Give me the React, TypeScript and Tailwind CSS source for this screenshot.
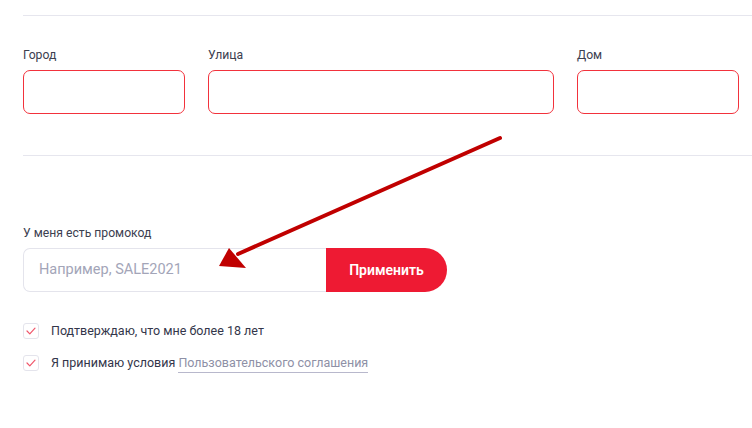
import React from 'react';

const Field = ({ label, width }: { label: string; width: string }) => (
  <div className={`flex flex-col ${width}`}>
    <span className="text-[12.2px] leading-4 text-[#3c4050] mb-[7px]">{label}</span>
    <div className="h-[44px] rounded-[7px] border border-[#f2323c] bg-white" />
  </div>
);

const Check = ({ children }: { children: React.ReactNode }) => (
  <label className="flex items-center gap-3">
    <span className="w-4 h-4 rounded-[3px] border border-[#e4e4ec] flex items-center justify-center">
      <svg width="10" height="8" viewBox="0 0 10 8" fill="none">
        <path d="M1 4l2.8 2.8L9 1.2" stroke="#f0566a" strokeWidth="1.2" strokeLinecap="round" strokeLinejoin="round" />
      </svg>
    </span>
    <span className="text-[12.5px] leading-5 text-[#33364a]">{children}</span>
  </label>
);

export default function App() {
  return (
    <div
      className="relative w-[752px] h-[428px] bg-white overflow-hidden"
      style={{ fontFamily: 'Roboto, "Noto Sans", sans-serif' }}
    >
      <div className="pl-[23px] pt-[15px]">
        <div className="border-t border-[#e6e6ee]" />

        <div className="flex gap-[23px] mt-[31px]">
          <Field label="Город" width="w-[162px]" />
          <Field label="Улица" width="w-[346px]" />
          <Field label="Дом" width="w-[162px]" />
        </div>

        <div className="border-t border-[#e6e6ee] mt-[41px]" />

        <div className="mt-[69px] flex flex-col">
          <span className="text-[12.2px] leading-4 text-[#3c4050] mb-[7px]">У меня есть промокод</span>
          <div className="flex h-[44px]">
            <div className="w-[303px] rounded-l-[7px] border border-r-0 border-[#e4e4ec] flex items-center pl-[15px] text-[14.5px] text-[#a3a5b8]">
              Например, SALE2021
            </div>
            <button className="w-[121px] rounded-r-[22px] bg-[#ee1a33] text-white text-[14px] font-semibold">
              Применить
            </button>
          </div>
        </div>

        <div className="mt-[29px] flex flex-col gap-[12px]">
          <Check>Подтверждаю, что мне более 18 лет</Check>
          <Check>
            Я принимаю условия{' '}
            <span className="text-[#8e90a6] border-b border-[#b8b8cc] pb-[2px]">Пользовательского соглашения</span>
          </Check>
        </div>
      </div>

      <svg className="absolute inset-0 pointer-events-none" width="752" height="428">
        <path d="M500 138 L238 254" stroke="#c00000" strokeWidth="4" strokeLinecap="round" />
        <polygon points="219,266 229,248 246,268" fill="#c00000" />
      </svg>
    </div>
  );
}
